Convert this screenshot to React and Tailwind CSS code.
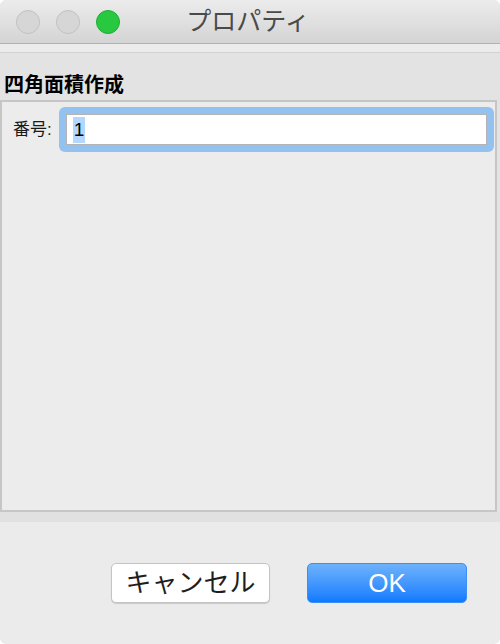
import React from 'react'

const FONT = { fontFamily: '"Liberation Sans", "Noto Sans CJK JP", sans-serif' }

function Light({ colour }) {
  return <span className={`block w-[24px] h-[24px] rounded-full border ${colour}`} />
}

export default function App() {
  return (
    <div className="w-[500px] h-[644px] bg-white" style={FONT}>
      <div className="w-full h-full bg-[#ebebeb] rounded-[6px] overflow-hidden flex flex-col">
        {/* Title bar */}
        <div className="relative h-[44px] shrink-0 flex items-center gap-[16px] pl-[16px] bg-gradient-to-b from-[#ececec] to-[#d4d4d4] border-b border-[#b1b1b1]">
          <Light colour="bg-[#d6d6d6] border-[#c2c2c2]" />
          <Light colour="bg-[#d6d6d6] border-[#c2c2c2]" />
          <Light colour="bg-[#28c840] border-[#1fae34]" />
          <span className="absolute inset-x-0 text-center text-[25px] leading-none text-[#4a4a4a] pr-[4px] pointer-events-none">
            プロパティ
          </span>
        </div>

        {/* Toolbar strip */}
        <div className="h-[9px] shrink-0 bg-[#ececec] border-b border-[#d2d2d2]" />

        {/* Heading */}
        <div className="h-[47px] shrink-0 bg-[#e3e3e3] flex items-end pl-[4px] pb-[5px]">
          <span className="text-[20px] font-bold leading-none text-black">四角面積作成</span>
        </div>

        {/* Panel */}
        <div className="flex bg-[#e3e3e3] h-[412px] shrink-0 pr-[3px]">
          <div className="flex-1 bg-[#ececec] border-2 border-[#c6c6c6] pt-[5px] pl-[11px] pr-[1px]">
            <div className="flex items-center gap-[7px]">
              <span className="text-[17px] text-[#1a1a1a] leading-none">番号:</span>
              <div className="flex-1 h-[45px] rounded-[6px] bg-[#93c1f0] p-[7px]">
                <div className="h-full bg-white border border-[#b4b4b4] flex items-center pl-[6px]">
                  <span className="bg-[#b3d7ff] text-[19px] leading-[26px] px-[1px] text-black">1</span>
                </div>
              </div>
            </div>
          </div>
        </div>

        {/* Divider strip */}
        <div className="h-[10px] shrink-0 bg-[#e1e1e1]" />

        {/* Buttons */}
        <div className="flex-1 flex items-start justify-end gap-[37px] pt-[41px] pr-[33px]">
          <button className="w-[159px] h-[40px] rounded-[5px] bg-white border border-[#c4c4c4] shadow-[0_1px_1px_rgba(0,0,0,0.15)] text-[26px] leading-none text-[#1e1e1e]">
            キャンセル
          </button>
          <button className="w-[160px] h-[40px] rounded-[5px] bg-gradient-to-b from-[#6cb2fb] to-[#0b7aff] border border-[#3d8ff5] text-[26px] leading-none text-white">
            OK
          </button>
        </div>
      </div>
    </div>
  )
}
